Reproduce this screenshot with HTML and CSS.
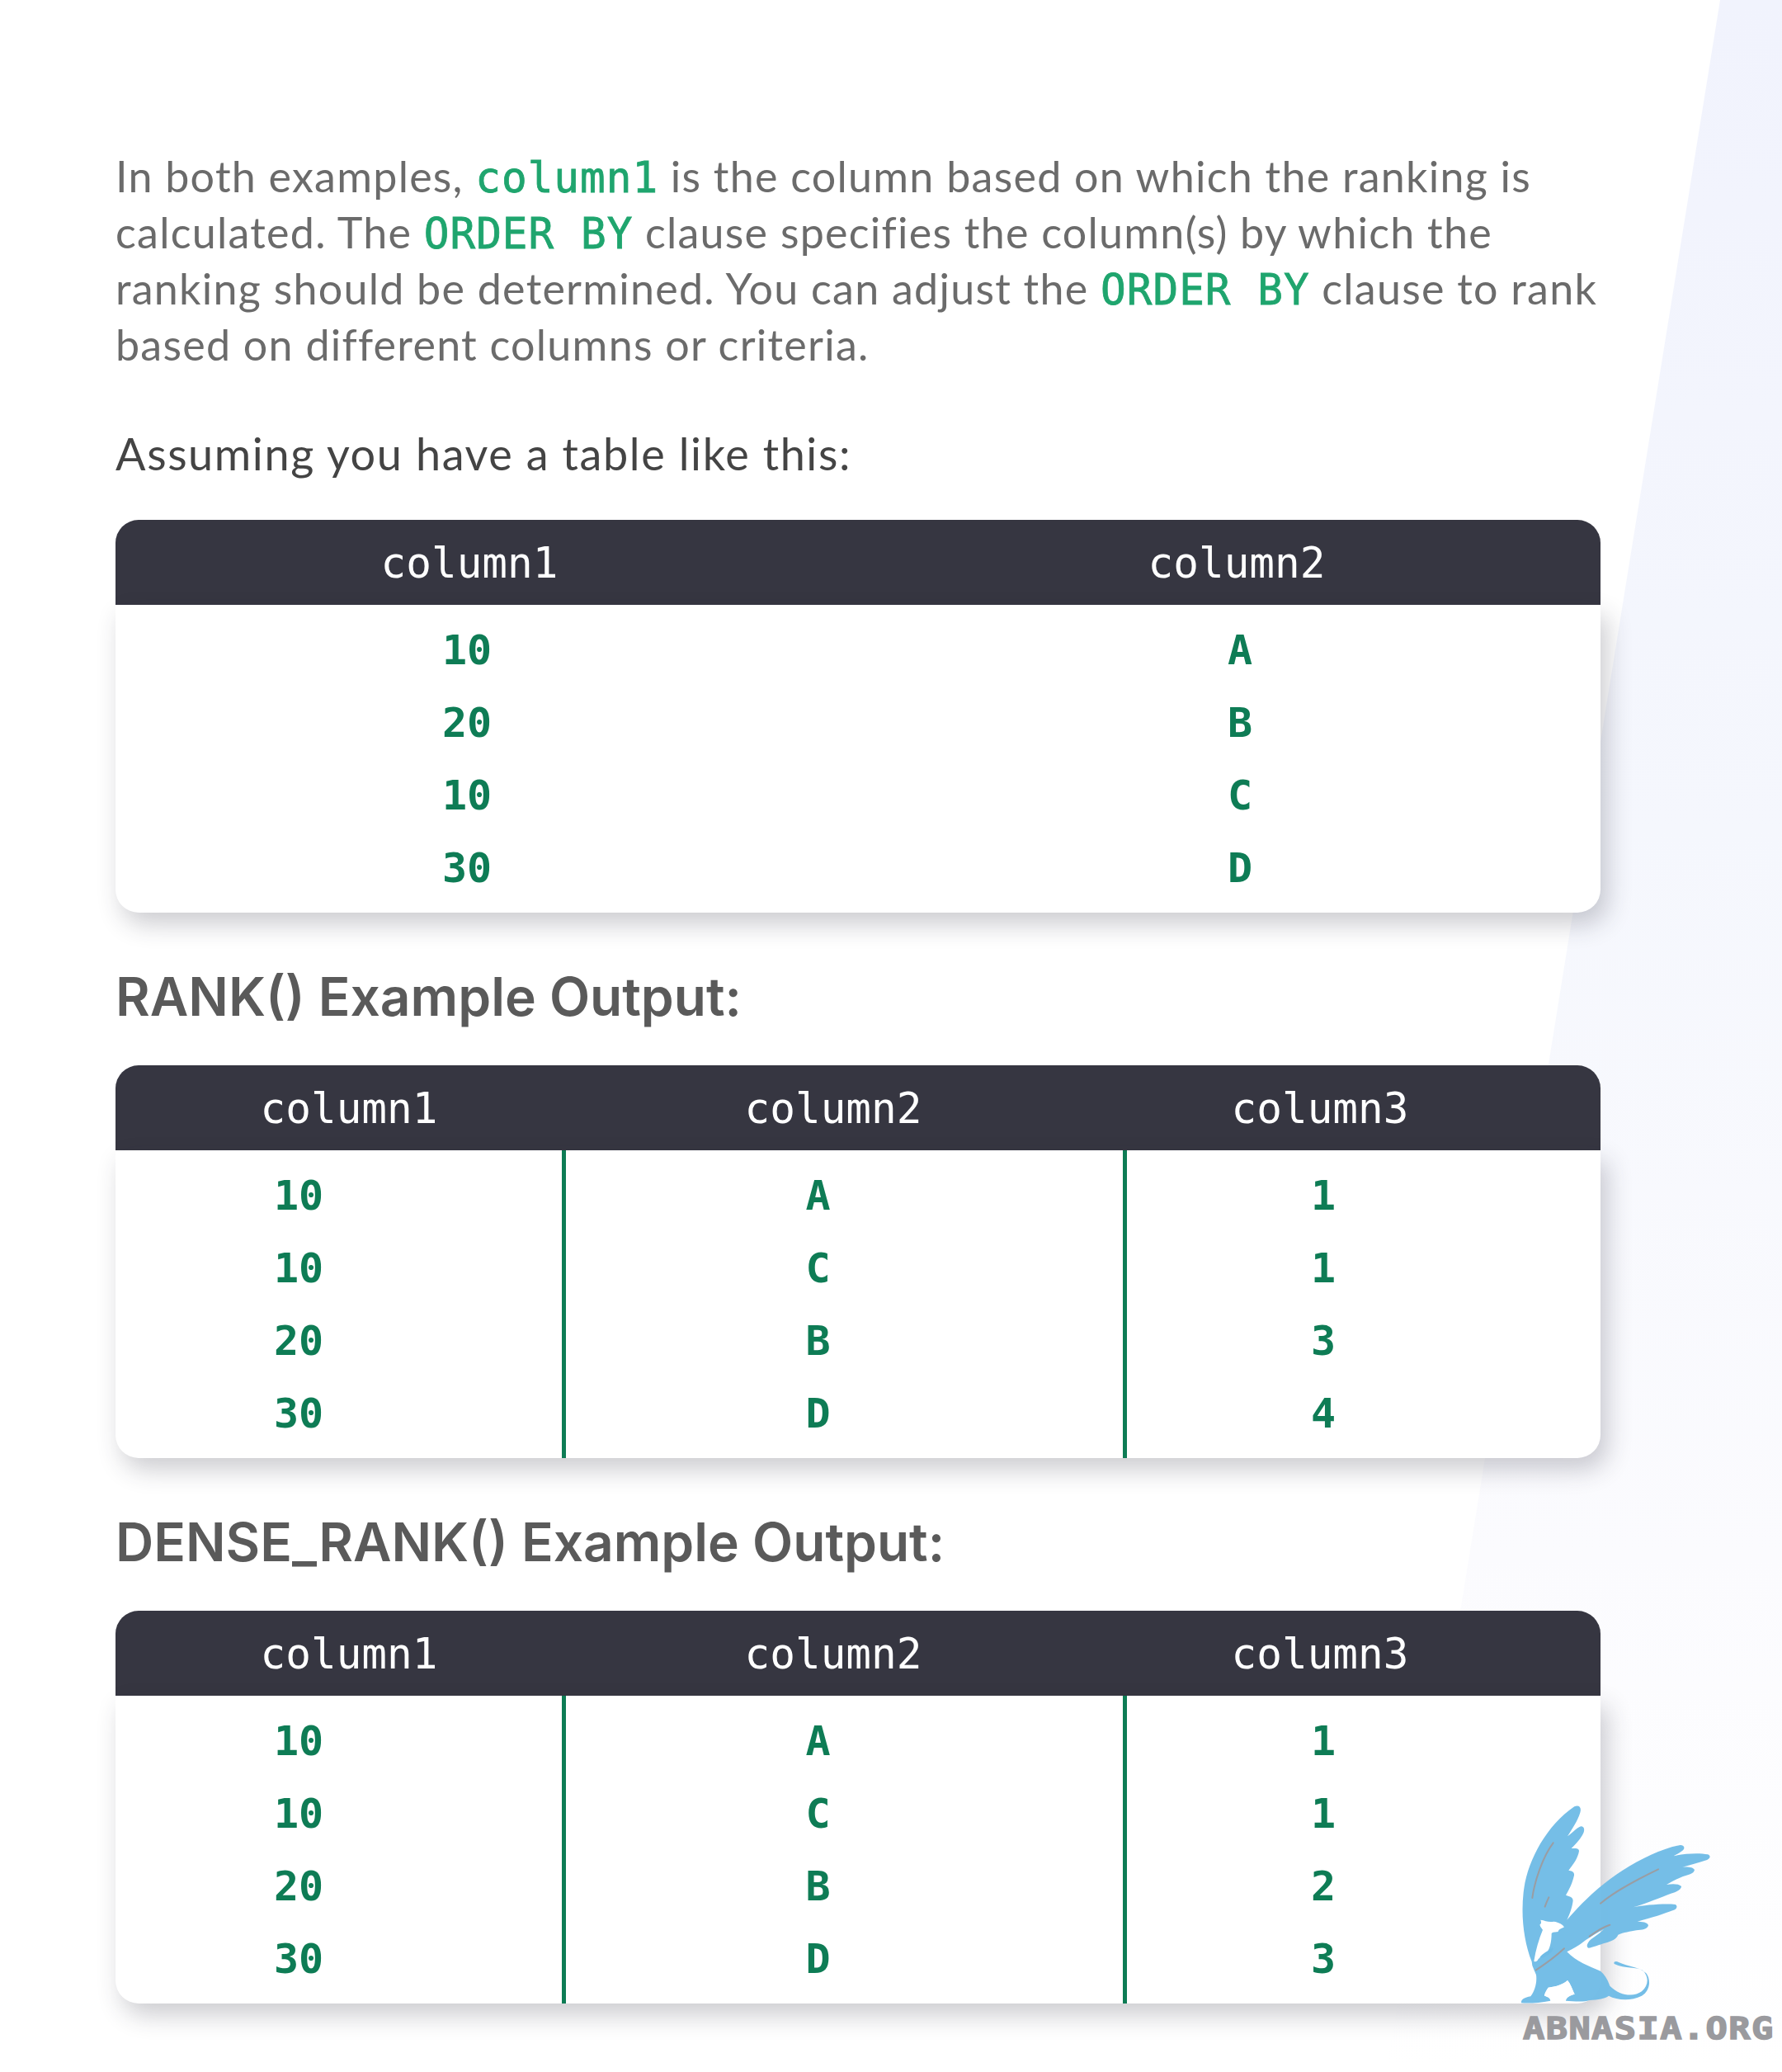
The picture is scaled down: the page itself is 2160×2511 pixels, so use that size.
FILE: index.html
```html
<!DOCTYPE html>
<html lang="en">

<head>
    <meta charset="UTF-8">
    <meta name="viewport" content="width=device-width, initial-scale=1.0">
    <title>RANK vs DENSE_RANK</title>
    <link rel="stylesheet" href="styles.css">
</head>

<body>
    <div class="bg-shape"></div>
    <div class="content">
        <p class="intro">In both examples, <code>column1</code> is the column based on which the ranking is<br>
            calculated. The <code>ORDER BY</code> clause specifies the column(s) by which the<br>
            ranking should be determined. You can adjust the <code>ORDER BY</code> clause to rank<br>
            based on different columns or criteria.</p>
        <p class="lead">Assuming you have a table like this:</p>

        <div class="data-table two-col">
            <div class="table-head">
                <div>column1</div>
                <div>column2</div>
            </div>
            <div class="table-body">
                <div class="col">
                    <div>10</div>
                    <div>20</div>
                    <div>10</div>
                    <div>30</div>
                </div>
                <div class="col">
                    <div>A</div>
                    <div>B</div>
                    <div>C</div>
                    <div>D</div>
                </div>
            </div>
        </div>

        <h3>RANK() Example Output:</h3>
        <div class="data-table three-col">
            <div class="table-head">
                <div>column1</div>
                <div>column2</div>
                <div>column3</div>
            </div>
            <div class="table-body">
                <div class="col">
                    <div>10</div>
                    <div>10</div>
                    <div>20</div>
                    <div>30</div>
                </div>
                <div class="col">
                    <div>A</div>
                    <div>C</div>
                    <div>B</div>
                    <div>D</div>
                </div>
                <div class="col">
                    <div>1</div>
                    <div>1</div>
                    <div>3</div>
                    <div>4</div>
                </div>
            </div>
        </div>

        <h3>DENSE_RANK() Example Output:</h3>
        <div class="data-table three-col">
            <div class="table-head">
                <div>column1</div>
                <div>column2</div>
                <div>column3</div>
            </div>
            <div class="table-body">
                <div class="col">
                    <div>10</div>
                    <div>10</div>
                    <div>20</div>
                    <div>30</div>
                </div>
                <div class="col">
                    <div>A</div>
                    <div>C</div>
                    <div>B</div>
                    <div>D</div>
                </div>
                <div class="col">
                    <div>1</div>
                    <div>1</div>
                    <div>2</div>
                    <div>3</div>
                </div>
            </div>
        </div>
    </div>

    <div class="watermark">
        <svg class="griffin" width="400" height="290" viewBox="0 0 1200 870" xmlns="http://www.w3.org/2000/svg">
            <path fill="#6fbbe6" fill-opacity="0.96" d="M290 682C262 610 250 520 260 430C272 320 340 190 445 118C462 110 472 122 466 140C456 172 436 200 420 226C440 212 458 190 472 190C484 194 482 208 474 222C462 242 448 256 434 270C446 270 462 268 462 280C458 306 440 330 424 350C434 352 446 354 444 368C438 396 426 420 414 440C424 444 440 446 440 460C438 482 428 510 418 530C470 470 540 400 620 350C690 306 770 268 830 258C846 258 848 270 838 278C828 286 816 292 806 298C846 288 900 286 930 292C944 298 938 310 920 314C896 322 866 330 838 338C856 336 878 338 882 348C880 362 860 366 840 372C820 380 800 390 780 402C800 398 826 398 834 408C834 420 816 428 796 434C760 448 716 466 660 484C700 476 770 470 812 474C822 480 818 492 802 496C770 508 730 522 674 536C690 536 712 538 714 550C710 566 690 566 670 568C650 572 622 576 604 584C598 600 580 608 556 614C536 620 512 630 496 632C486 628 492 612 506 600C520 590 536 580 552 564C520 580 490 600 470 616C450 630 430 640 418 646C450 680 500 700 540 716C552 726 566 744 574 770C610 806 660 812 690 790C716 768 716 736 694 714C670 698 630 710 590 690C586 682 596 678 606 684C640 700 680 700 706 724C726 750 718 790 690 806C650 826 600 822 570 806C556 816 532 820 500 822C480 830 440 826 414 824C414 812 430 804 446 800C436 780 430 760 420 750C400 770 360 775 350 776C340 790 336 800 336 806C350 808 360 814 358 824C320 832 280 834 252 832C250 820 262 812 286 808C300 790 310 760 306 730C300 716 296 706 292 696Z"/>
            <path fill="#ffffff" d="M322 530C340 532 350 540 370 536C388 538 404 548 408 556C398 562 390 562 386 572C376 576 366 572 362 580C362 610 356 640 340 654C330 664 318 668 314 672C310 682 302 684 298 680C304 640 316 600 330 566C326 560 318 552 320 546C324 544 326 540 322 530Z"/>
            <path fill="#ffffff" d="M446 800C436 780 430 760 420 750C400 770 360 775 350 776C342 788 336 800 336 806C350 810 358 816 358 824L414 824C414 812 430 804 446 800Z"/>
            <path fill="#6fbbe6" d="M318 668C330 650 350 644 366 630C372 640 356 654 344 660C336 666 326 670 318 668Z"/>
            <path fill="none" stroke="#9a9da3" stroke-width="6" stroke-linecap="round" d="M292 450C300 390 330 300 368 250M338 482C342 470 346 460 352 448M540 470C600 420 680 380 750 346M306 712C340 690 380 660 408 634M500 590C520 575 550 555 574 548"/>
        </svg>
        <div class="brand">ABNASIA.ORG</div>
    </div>
</body>

</html>
```

FILE: styles.css
```css
* {
    margin: 0;
    padding: 0;
    box-sizing: border-box;
}

body {
    position: relative;
    width: 2160px;
    height: 2511px;
    overflow: hidden;
    background-color: white;
    font-family: Lato, sans-serif;
}

.bg-shape {
    position: absolute;
    inset: 0;
    background: linear-gradient(180deg, #f1f3fd 0%, #f5f7fd 40%, #fbfbfe 75%, #ffffff 100%);
    clip-path: polygon(2085px 0, 2160px 0, 2160px 2511px, 1680px 2511px);
}

.content {
    position: relative;
    width: 2160px;
    padding: 179px 220px 0 140px;
}

.intro {
    font-size: 52px;
    line-height: 68px;
    letter-spacing: 1.25px;
    color: #6b6b6b;
}

.intro code {
    font-family: "DejaVu Sans Mono", monospace;
    font-size: 51px;
    line-height: 1;
    letter-spacing: 1px;
    color: #1fa56e;
    -webkit-text-stroke: 0.8px #1fa56e;
    white-space: pre;
}

.lead {
    margin-top: 65px;
    font-size: 54px;
    line-height: 68px;
    letter-spacing: 1.6px;
    color: #444;
}

h3 {
    margin: 66px 0 47px;
    font-family: Inter, sans-serif;
    font-size: 64px;
    font-weight: 600;
    line-height: 72px;
    color: #5a5a5a;
}

.data-table {
    margin-top: 46px;
    font-family: "DejaVu Sans Mono", monospace;
    font-size: 50px;
}

h3 + .data-table {
    margin-top: 0;
}

.table-head {
    display: grid;
    height: 103px;
    padding-top: 2px;
    align-items: center;
    text-align: center;
    background-color: #363641;
    border-radius: 28px 28px 0 0;
    color: white;
    font-size: 51px;
}

.table-body {
    display: grid;
    background-color: white;
    border-radius: 0 0 28px 28px;
    box-shadow: 8px 14px 30px rgba(40, 40, 60, 0.24);
    color: #0e7c55;
    font-weight: bold;
    text-align: center;
}

.col {
    padding: 11px 0 10px;
}

.col div {
    height: 88px;
    line-height: 88px;
}

.two-col .table-head {
    grid-template-columns: 858px 942px;
}

.two-col .table-head div:nth-child(2) {
    padding-left: 60px;
}

.two-col .table-body {
    grid-template-columns: 852px 948px;
}

.two-col .col:nth-child(2) {
    padding-left: 74px;
}

.three-col .table-head {
    grid-template-columns: 566px 608px 572px;
}

.three-col .table-body {
    grid-template-columns: 541px 685px 574px;
}

.three-col .col:nth-child(1) {
    padding-right: 97px;
}

.three-col .col:nth-child(2) {
    padding-right: 64px;
    border-left: 5px solid #0e7c55;
    border-right: 5px solid #0e7c55;
}

.three-col .col:nth-child(3) {
    padding-right: 98px;
}

/* logo sits over the last table */
.watermark {
    position: absolute;
    left: 1760px;
    top: 2150px;
    width: 400px;
}

.griffin {
    display: block;
}

.brand {
    position: absolute;
    left: 86px;
    top: 293px;
    font-family: "DejaVu Sans Mono", monospace;
    font-size: 38px;
    font-weight: bold;
    line-height: 30px;
    letter-spacing: 1.2px;
    color: #9a9a9e;
    -webkit-text-stroke: 1.5px #9a9a9e;
    transform: scaleX(1.15);
    transform-origin: left center;
}
```
